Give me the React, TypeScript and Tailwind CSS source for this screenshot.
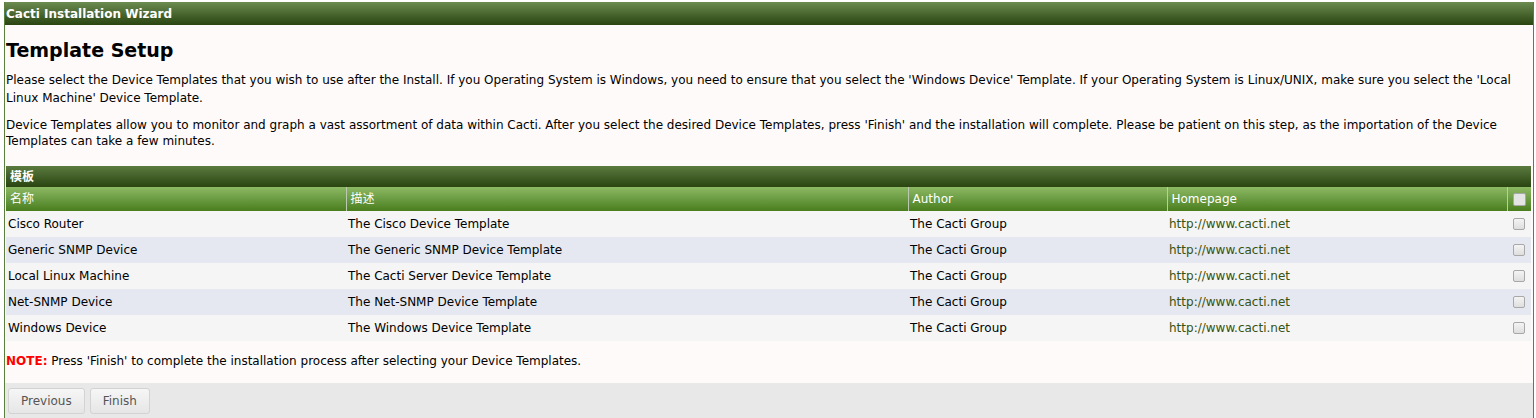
import React from 'react';

const rows = [
  { name: 'Cisco Router', desc: 'The Cisco Device Template' },
  { name: 'Generic SNMP Device', desc: 'The Generic SNMP Device Template' },
  { name: 'Local Linux Machine', desc: 'The Cacti Server Device Template' },
  { name: 'Net-SNMP Device', desc: 'The Net-SNMP Device Template' },
  { name: 'Windows Device', desc: 'The Windows Device Template' },
];

const Check: React.FC<{ header?: boolean }> = ({ header }) => (
  <span
    className={
      'inline-block rounded-[2px] border border-[#a8a8a8] ' +
      (header ? 'w-[13px] h-[13px] bg-[#e4e4e4]' : 'w-[12px] h-[12px] bg-gradient-to-b from-[#f4f4f4] to-[#dedede]')
    }
  />
);

export default function App() {
  return (
    <div
      className="bg-white min-h-[418px] pt-[2px] pl-[4px] pr-[2px] text-[12px] text-black"
      style={{ fontFamily: '"DejaVu Sans", Verdana, "Noto Sans CJK SC", sans-serif' }}
    >
      <div className="border-l border-r border-[#5b7f3e] bg-[#fffafa]">
        <div className="h-[23px] px-[1px] flex items-center bg-gradient-to-b from-[#6c8c50] to-[#2a4510] text-white font-bold text-[12px]">
          Cacti Installation Wizard
        </div>
        <div className="px-[1px]">
          <h1 className="text-[19px] font-bold mt-[13px] mb-[9px] leading-[24px]">Template Setup</h1>
          <p className="leading-[18px] mb-[10px]">
            Please select the Device Templates that you wish to use after the Install. If you Operating System is Windows, you need to ensure that you select the 'Windows Device' Template. If your Operating System is Linux/UNIX, make sure you select the 'Local Linux Machine' Device Template.
          </p>
          <p className="leading-[16px] mb-[17px]">
            Device Templates allow you to monitor and graph a vast assortment of data within Cacti. After you select the desired Device Templates, press 'Finish' and the installation will complete. Please be patient on this step, as the importation of the Device Templates can take a few minutes.
          </p>
          <div className="mr-[1px]">
            <div className="h-[21px] px-[4px] flex items-center bg-gradient-to-b from-[#5b7b40] to-[#2a4510] text-white font-bold text-[12px]">
              模板
            </div>
            <table className="w-full border-collapse">
              <thead>
                <tr className="h-[24px] bg-gradient-to-b from-[#8cba64] to-[#4a7d1c] text-white text-left">
                  <th className="font-normal px-[4px] w-[340px] text-left">名称</th>
                  <th className="font-normal px-[4px] w-[562px] text-left border-l border-[#bcc8b0]">描述</th>
                  <th className="font-normal px-[4px] w-[259px] text-left border-l border-[#bcc8b0]">Author</th>
                  <th className="font-normal px-[4px] text-left border-l border-[#bcc8b0]">Homepage</th>
                  <th className="font-normal w-[24px] text-center border-l border-[#bcc8b0]">
                    <span className="flex justify-center"><Check header /></span>
                  </th>
                </tr>
              </thead>
              <tbody>
                {rows.map((r, i) => (
                  <tr key={r.name} className={'h-[26px] ' + (i % 2 === 0 ? 'bg-[#f5f5f5]' : 'bg-[#e5e8f1]')}>
                    <td className="px-[2px]">{r.name}</td>
                    <td className="px-[2px]">{r.desc}</td>
                    <td className="px-[2px]">The Cacti Group</td>
                    <td className="px-[2px] text-[#38520f]">http://www.cacti.net</td>
                    <td className="text-center">
                      <span className="flex justify-center"><Check /></span>
                    </td>
                  </tr>
                ))}
              </tbody>
            </table>
          </div>
          <p className="leading-[16px] pt-[12px] pb-[14px]">
            <span className="text-[#ff0000] font-bold">NOTE:</span> Press 'Finish' to complete the installation process after selecting your Device Templates.
          </p>
        </div>
        <div className="bg-[#e8e8e8] h-[36px] flex items-center gap-[5px] px-[3px]">
          <button className="h-[26px] px-[12px] rounded-[3px] border border-[#d3d3d3] bg-gradient-to-b from-[#f6f6f6] to-[#e6e6e6] text-[#555]">
            Previous
          </button>
          <button className="h-[26px] px-[12px] rounded-[3px] border border-[#d3d3d3] bg-gradient-to-b from-[#f6f6f6] to-[#e6e6e6] text-[#555]">
            Finish
          </button>
        </div>
      </div>
    </div>
  );
}
